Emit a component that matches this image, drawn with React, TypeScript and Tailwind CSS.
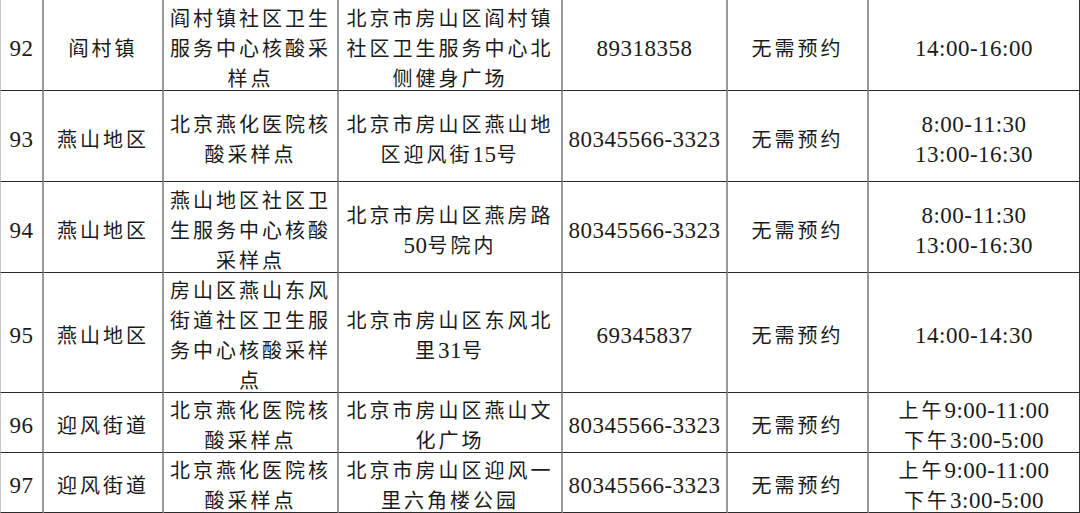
import React from 'react';

interface SiteRow {
  id: string;
  area: string;
  site: string[];
  address: string[];
  phone: string;
  booking: string;
  hours: string[];
}

const rows: SiteRow[] = [
  {
    id: '92',
    area: '阎村镇',
    site: ['阎村镇社区卫生', '服务中心核酸采', '样点'],
    address: ['北京市房山区阎村镇', '社区卫生服务中心北', '侧健身广场'],
    phone: '89318358',
    booking: '无需预约',
    hours: ['14:00-16:00'],
  },
  {
    id: '93',
    area: '燕山地区',
    site: ['北京燕化医院核', '酸采样点'],
    address: ['北京市房山区燕山地', '区迎风街15号'],
    phone: '80345566-3323',
    booking: '无需预约',
    hours: ['8:00-11:30', '13:00-16:30'],
  },
  {
    id: '94',
    area: '燕山地区',
    site: ['燕山地区社区卫', '生服务中心核酸', '采样点'],
    address: ['北京市房山区燕房路', '50号院内'],
    phone: '80345566-3323',
    booking: '无需预约',
    hours: ['8:00-11:30', '13:00-16:30'],
  },
  {
    id: '95',
    area: '燕山地区',
    site: ['房山区燕山东风', '街道社区卫生服', '务中心核酸采样', '点'],
    address: ['北京市房山区东风北', '里31号'],
    phone: '69345837',
    booking: '无需预约',
    hours: ['14:00-14:30'],
  },
  {
    id: '96',
    area: '迎风街道',
    site: ['北京燕化医院核', '酸采样点'],
    address: ['北京市房山区燕山文', '化广场'],
    phone: '80345566-3323',
    booking: '无需预约',
    hours: ['上午9:00-11:00', '下午3:00-5:00'],
  },
  {
    id: '97',
    area: '迎风街道',
    site: ['北京燕化医院核', '酸采样点'],
    address: ['北京市房山区迎风一', '里六角楼公园'],
    phone: '80345566-3323',
    booking: '无需预约',
    hours: ['上午9:00-11:00', '下午3:00-5:00'],
  },
];

// digits come out narrower and in a serif face, like the printed sheet
function Mixed({ text }: { text: string }) {
  const parts = text.split(/([0-9:\-]+)/);
  return (
    <>
      {parts.map((p, i) =>
        /^[0-9:\-]+$/.test(p) ? (
          <span
            key={i}
            className="text-[23px] leading-none tracking-[0.5px] font-['Liberation_Serif',serif]"
          >
            {p}
          </span>
        ) : (
          <span key={i} className="text-[20px] leading-none tracking-[3px]">
            {p}
          </span>
        )
      )}
    </>
  );
}

function Cell({
  lines,
  first,
  last,
}: {
  lines: string[];
  first?: boolean;
  last?: boolean;
}) {
  return (
    <div
      className={`flex flex-col items-center justify-center pt-[11px] text-center border-b border-b-[#2a2a2a] ${
        last ? 'border-r border-r-[#333]' : 'border-r-2 border-r-[#9a9a9a]'
      } ${first ? 'border-l border-l-[#c8c8c8]' : ''}`}
    >
      {lines.map((l, i) => (
        <div key={i} className="h-[30px] shrink-0 leading-[30px] whitespace-nowrap">
          <Mixed text={l} />
        </div>
      ))}
    </div>
  );
}

export default function App() {
  return (
    <div className="w-[1080px] h-[513px] overflow-hidden bg-white text-[#1a1a1a] font-['Liberation_Serif','Noto_Sans_CJK_SC',serif]">
      <div className="grid grid-cols-[44px_120px_175px_224px_165px_141px_211px] grid-rows-[91px_91px_91px_120px_60px_60px]">
        {rows.map((r) => (
          <React.Fragment key={r.id}>
            <Cell lines={[r.id]} first />
            <Cell lines={[r.area]} />
            <Cell lines={r.site} />
            <Cell lines={r.address} />
            <Cell lines={[r.phone]} />
            <Cell lines={[r.booking]} />
            <Cell lines={r.hours} last />
          </React.Fragment>
        ))}
      </div>
    </div>
  );
}
